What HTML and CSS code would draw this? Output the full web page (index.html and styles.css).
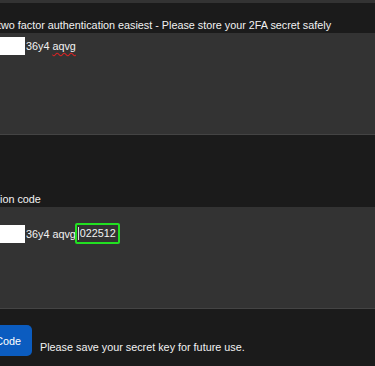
FILE: index.html
```html
<!DOCTYPE html>
<html lang="en">
<head>
  <meta charset="UTF-8" />
  <meta name="viewport" content="width=device-width, initial-scale=1.0"/>
  <title>Two factor setup</title>
  <link rel="stylesheet" href="styles.css">
</head>
<body>
  <div class="top-edge"></div>

  <form class="setup">
    <div class="field">
      <label class="field-label">two factor authentication easiest - Please store your 2FA secret safely</label>
      <div class="box">
        <span class="redact"></span><span class="secret">36y4 <span class="squiggle">aqvg</span></span>
      </div>
    </div>

    <div class="field field-code">
      <label class="field-label">ion code</label>
      <div class="box box-code">
        <span class="redact"></span><span class="secret">36y4 aqvg</span><span class="otp"><span class="caret"></span>022512</span>
      </div>
    </div>

    <div class="actions">
      <button type="button" class="btn">Code</button>
      <p class="note">Please save your secret key for future use.</p>
    </div>
  </form>
</body>
</html>
```

FILE: styles.css
```css
:root {
  --bg-dark: #1b1b1b;
  --bg-box: #333333;
  --text-light: #f2f2f2;
  --accent-green: #22e022;
  --btn-blue: #0b5cc0;
}

body {
  margin: 0;
  font-family: "Liberation Sans", Arial, sans-serif;
  font-size: 10.8px;
  background: var(--bg-dark);
  color: var(--text-light);
  overflow: hidden;
}

.top-edge {
  height: 3px;
  background: var(--bg-box);
}

.field-label {
  display: block;
  padding-top: 14px;
  height: 16px;
  line-height: 16px;
  white-space: nowrap;
  text-indent: -2px;
}

.box {
  height: 102px;
  box-sizing: border-box;
  background: var(--bg-box);
  border-bottom: 1px solid #444;
  padding-top: 4px;
  display: flex;
  align-items: center;
  align-content: flex-start;
  flex-wrap: wrap;
}

.field-code {
  margin-top: 56px;
}

.field-code .field-label {
  padding-top: 0;
  text-indent: 0;
}

.box-code {
  padding-top: 16px;
}

.redact {
  display: inline-block;
  width: 25px;
  height: 18px;
  background: #fff;
  margin-right: 1px;
}

.secret {
  line-height: 18px;
}

.squiggle {
  text-decoration: underline wavy #d22;
  text-underline-offset: 2px;
}

.otp {
  display: inline-flex;
  align-items: center;
  margin-left: -1px;
  padding: 1px 2px 1px 1px;
  line-height: 15px;
  border: 2px solid var(--accent-green);
  border-radius: 2px;
}

.caret {
  display: inline-block;
  width: 1px;
  height: 13px;
  background: #ddd;
  margin-right: 1px;
}

.actions {
  display: flex;
  align-items: flex-end;
  margin-top: 16px;
}

.btn {
  width: 32px;
  height: 31px;
  direction: rtl;
  overflow: hidden;
  background: var(--btn-blue);
  color: #fff;
  font: inherit;
  border: none;
  border-radius: 0 5px 5px 0;
  text-align: right;
  padding: 0 11px 0 0;
  box-sizing: border-box;
  white-space: nowrap;
}

.note {
  margin: 0 0 1px 8px;
  line-height: 16px;
}
```
